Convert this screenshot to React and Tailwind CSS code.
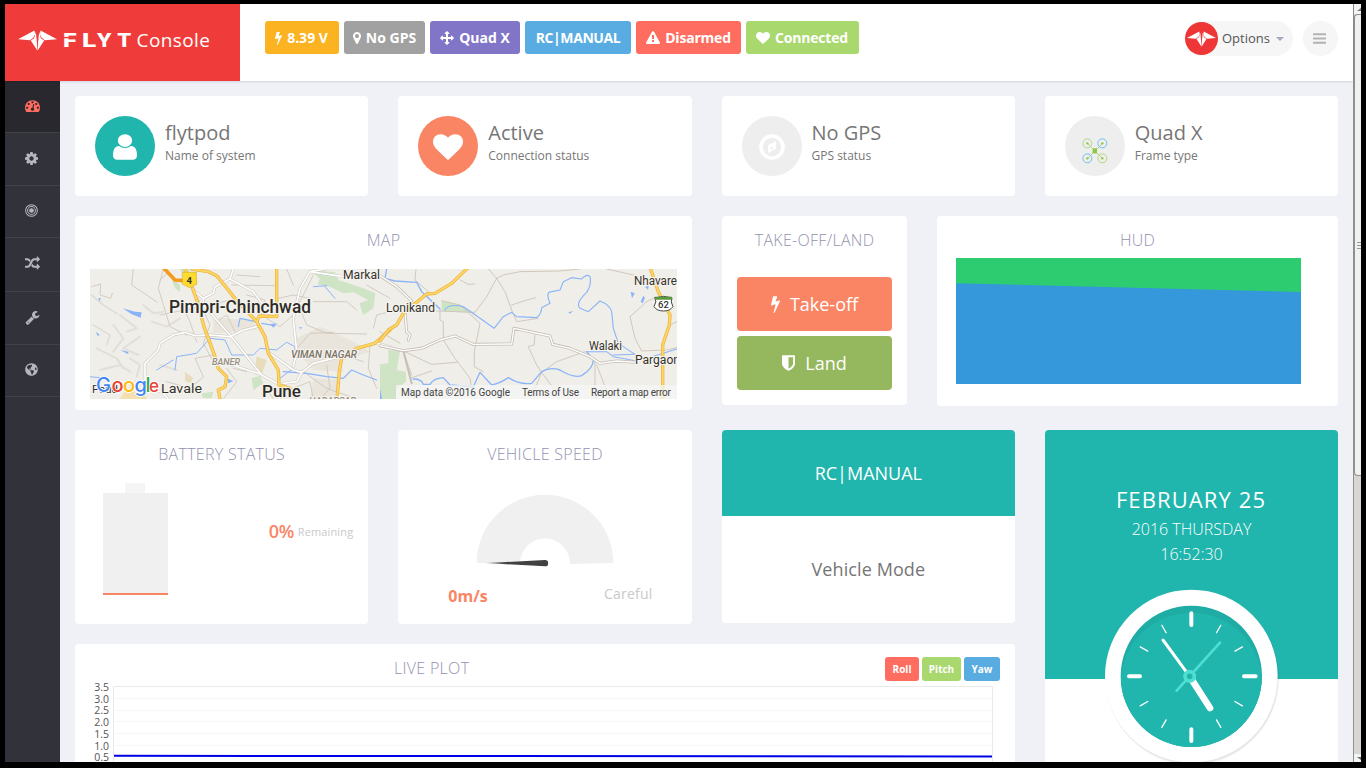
import React from "react";
import { FaGlobeAmericas } from "react-icons/fa";

const P = {
  bars: ["128 0 1536 1792", "M1664 1344v128q0 26-19 45t-45 19h-1408q-26 0-45-19t-19-45v-128q0-26 19-45t45-19h1408q26 0 45 19t19 45zm0-512v128q0 26-19 45t-45 19h-1408q-26 0-45-19t-19-45v-128q0-26 19-45t45-19h1408q26 0 45 19t19 45zm0-512v128q0 26-19 45t-45 19h-1408q-26 0-45-19t-19-45v-128q0-26 19-45t45-19h1408q26 0 45 19t19 45z"],
  bolt: ["448 0 896 1792", "M1333 566q18 20 7 44l-540 1157q-13 25-42 25-4 0-14-2-17-5-25.5-19t-4.5-30l197-808-406 101q-4 1-12 1-18 0-31-11-18-15-13-39l201-825q4-14 16-23t28-9h328q19 0 32 12.5t13 29.5q0 8-5 18l-171 463 396-98q8-2 12-2 19 0 34 15z"],
  marker: ["384 0 1024 1792", "M1152 640q0-106-75-181t-181-75-181 75-75 181 75 181 181 75 181-75 75-181zm256 0q0 109-33 179l-364 774q-16 33-47.5 52t-67.5 19-67.5-19-46.5-52l-365-774q-33-70-33-179 0-212 150-362t362-150 362 150 150 362z"],
  arrows: ["0 0 1792 1792", "M1792 896q0 26-19 45l-256 256q-19 19-45 19t-45-19-19-45v-128h-384v384h128q26 0 45 19t19 45-19 45l-256 256q-19 19-45 19t-45-19l-256-256q-19-19-19-45t19-45 45-19h128v-384h-384v128q0 26-19 45t-45 19-45-19l-256-256q-19-19-19-45t19-45l256-256q19-19 45-19t45 19 19 45v128h384v-384h-128q-26 0-45-19t-19-45 19-45l256-256q19-19 45-19t45 19l256 256q19 19 19 45t-19 45-45 19h-128v384h384v-128q0-26 19-45t45-19 45 19l256 256q19 19 19 45z"],
  warning: ["0 0 1792 1792", "M1024 1375v-190q0-14-9.5-23.5t-22.5-9.5h-192q-13 0-22.5 9.5t-9.5 23.5v190q0 14 9.5 23.5t22.5 9.5h192q13 0 22.5-9.5t9.5-23.5zm-2-374l18-459q0-12-10-19-13-11-24-11h-220q-11 0-24 11-10 7-10 21l17 457q0 10 10 16.5t24 6.5h185q14 0 23.5-6.5t10.5-16.5zm-14-934l768 1408q35 63-2 126-17 29-46.5 46t-63.5 17h-1536q-34 0-63.5-17t-46.5-46q-37-63-2-126l768-1408q17-31 47-49t65-18 65 18 47 49z"],
  heart: ["0 0 1792 1792", "M896 1664q-26 0-44-18l-624-602q-10-8-27.5-26t-55.5-65.5-68-97.5-53.5-121-23.5-138q0-220 127-344t351-124q62 0 126.5 21.5t120 58 95.5 68.5 76 68q36-36 76-68t95.5-68.5 120-58 126.5-21.5q224 0 351 124t127 344q0 221-229 450l-623 600q-18 18-44 18z"],
  tach: ["0 0 1792 1792", "M384 1152q0-53-37.5-90.5t-90.5-37.5-90.5 37.5-37.5 90.5 37.5 90.5 90.5 37.5 90.5-37.5 37.5-90.5zm192-448q0-53-37.5-90.5t-90.5-37.5-90.5 37.5-37.5 90.5 37.5 90.5 90.5 37.5 90.5-37.5 37.5-90.5zm428 481l101-382q6-26-7.5-48.5t-38.5-29.5-48 6.5-30 39.5l-101 382q-60 5-107 43.5t-63 98.5q-20 77 20 146t117 89 146-20 89-117q16-60-6-117t-72-91zm660-33q0-53-37.5-90.5t-90.5-37.5-90.5 37.5-37.5 90.5 37.5 90.5 90.5 37.5 90.5-37.5 37.5-90.5zm-640-640q0-53-37.5-90.5t-90.5-37.5-90.5 37.5-37.5 90.5 37.5 90.5 90.5 37.5 90.5-37.5 37.5-90.5zm448 192q0-53-37.5-90.5t-90.5-37.5-90.5 37.5-37.5 90.5 37.5 90.5 90.5 37.5 90.5-37.5 37.5-90.5zm320 448q0 261-141 483-19 29-54 29h-1402q-35 0-54-29-141-221-141-483 0-182 71-348t191-286 286-191 348-71 348 71 286 191 191 286 71 348z"],
  cog: ["128 0 1536 1792", "M1152 896q0-106-75-181t-181-75-181 75-75 181 75 181 181 75 181-75 75-181zm512-109v222q0 12-8 23t-20 13l-185 28q-19 54-39 91 35 50 107 138 10 12 10 25t-9 23q-27 37-99 108t-94 71q-12 0-26-9l-138-108q-44 23-91 38-16 136-29 186-7 28-36 28h-222q-14 0-24.5-8.5t-11.5-21.5l-28-184q-49-16-90-37l-141 107q-10 9-25 9-14 0-25-11-126-114-165-168-7-10-7-23 0-12 8-23 15-21 51-66.5t54-70.5q-27-50-41-99l-183-27q-13-2-21-12.5t-8-23.5v-222q0-12 8-23t19-13l186-28q14-46 39-92-40-57-107-138-10-12-10-24 0-10 9-23 26-36 98.5-107.5t94.5-71.5q13 0 26 10l138 107q44-23 91-38 16-136 29-186 7-28 36-28h222q14 0 24.5 8.5t11.5 21.5l28 184q49 16 90 37l142-107q9-9 24-9 13 0 25 10 129 119 165 170 7 8 7 22 0 12-8 23-15 21-51 66.5t-54 70.5q26 50 41 98l183 28q13 2 21 12.5t8 23.5z"],
  random: ["0 0 1792 1792", "M666 481q-60 92-137 273-22-45-37-72.5t-40.5-63.5-51-56.5-63-35-81.5-14.5h-224q-14 0-23-9t-9-23v-192q0-14 9-23t23-9h224q250 0 410 225zm1126 799q0 14-9 23l-320 320q-9 9-23 9-13 0-22.5-9.5t-9.5-22.5v-192q-32 0-85 .5t-81 1-73-1-71-5-64-10.5-63-18.5-58-28.5-59-40-55-53.5-56-69.5q59-93 136-273 22 45 37 72.5t40.5 63.5 51 56.5 63 35 81.5 14.5h256v-192q0-14 9-23t23-9q12 0 24 10l319 319q9 9 9 23zm0-896q0 14-9 23l-320 320q-9 9-23 9-13 0-22.5-9.5t-9.5-22.5v-192h-256q-48 0-87 15t-69 45-51 61.5-45 77.5q-32 62-78 171-29 66-49.5 111t-54 105-64 100-74 83-90 68.5-106.5 42-128 16.5h-224q-14 0-23-9t-9-23v-192q0-14 9-23t23-9h224q48 0 87-15t69-45 51-61.5 45-77.5q32-62 78-171 29-66 49.5-111t54-105 64-100 74-83 90-68.5 106.5-42 128-16.5h256v-192q0-14 9-23t23-9q12 0 24 10l319 319q9 9 9 23z"],
  wrench: ["0 0 1792 1792", "M448 1472q0-26-19-45t-45-19-45 19-19 45 19 45 45 19 45-19 19-45zm644-420l-682 682q-37 37-90 37-52 0-91-37l-106-108q-38-36-38-90 0-53 38-91l681-681q39 98 114.5 173.5t173.5 114.5zm634-435q0 39-23 106-47 134-164.5 217.5t-258.5 83.5q-185 0-316.5-131.5t-131.5-316.5 131.5-316.5 316.5-131.5q58 0 121.5 16.5t107.5 46.5q16 11 16 28t-16 28l-293 169v224l193 107q5-3 79-48.5t135.5-81 70.5-35.5q15 0 23.5 10t8.5 25z"],
  shield: ["256 0 1280 1792", "M1344 960v-640h-448v1137q119-63 213-137 235-184 235-360zm192-768v768q0 86-33.5 170.5t-83 150-118 127.5-126.5 103-121 77.5-89.5 49.5-42.5 20q-12 6-26 6t-26-6q-16-7-42.5-20t-89.5-49.5-121-77.5-126.5-103-118-127.5-83-150-33.5-170.5v-768q0-26 19-45t45-19h1152q26 0 45 19t19 45z"],
  user: ["256 0 1280 1792", "M1536 1399q0 109-62.5 187t-150.5 78h-854q-88 0-150.5-78t-62.5-187q0-85 8.5-160.5t31.5-152 58.5-131 94-89 134.5-34.5q131 128 313 128t313-128q76 0 134.5 34.5t94 89 58.5 131 31.5 152 8.5 160.5zm-256-887q0 159-112.5 271.5t-271.5 112.5-271.5-112.5-112.5-271.5 112.5-271.5 271.5-112.5 271.5 112.5 112.5 271.5z"],
};

function Icon({ name, className }) {
  const [viewBox, d] = P[name];
  return (
    <svg viewBox={viewBox} className={className} fill="currentColor" preserveAspectRatio="none">
      <path d={d} />
    </svg>
  );
}

/* Winged emblem on a 116 x 62 grid */
function Emblem({ className }) {
  return (
    <svg viewBox="0 0 116 62" className={className} fill="#fff">
      <path d="M0 27 L49 1 L51 12 L46 22 L36 30 Z M116 27 L67 1 L65 12 L70 22 L80 30 Z" />
      <path d="M38 31 L48 24 L53 6 L56 34 L57.5 61 Z M78 31 L68 24 L63 6 L60 34 L58.5 61 Z" />
    </svg>
  );
}

function Badge({ className, icon, iconClass, textClass = "", children }) {
  return (
    <div className={"flex h-[33px] items-center justify-center rounded-[3px] text-sm font-bold text-white " + className}>
      {icon && <Icon name={icon} className={"mr-[5px] shrink-0 " + iconClass} />}
      <span className={"whitespace-nowrap " + textClass}>{children}</span>
    </div>
  );
}

function Stat({ circle, icon, title, sub }) {
  return (
    <div className="flex h-[100px] rounded-[4px] bg-white px-5 pt-5">
      <div className={"flex size-[60px] items-center justify-center rounded-full " + circle}>{icon}</div>
      <div className="pt-[5px] pl-[10px] text-[#767676]">
        <div className="text-[20px] leading-[24px]">{title}</div>
        <div className="mt-px text-[12px] leading-[20px]">{sub}</div>
      </div>
    </div>
  );
}

function Title({ children }) {
  return <div className="text-center text-[16px] leading-[22px] font-light tracking-[0.3px] text-[#9292b0]">{children}</div>;
}

const nav = [
  ["h-[52px] bg-[#29282e] text-[#ff6c60]", <Icon name="tach" className="size-[15px]" />],
  ["h-[53px]", <Icon name="cog" className="h-[15px] w-[13px]" />],
  ["h-[52px]", (
    <svg viewBox="0 0 14 14" className="size-[13px]" fill="none" stroke="currentColor" strokeWidth="1.1">
      <circle cx="7" cy="7" r="6.3" /><circle cx="7" cy="7" r="4.2" /><circle cx="7" cy="7" r="2" fill="currentColor" />
    </svg>
  )],
  ["h-[54px]", <Icon name="random" className="size-[15px]" />],
  ["h-[53px]", <Icon name="wrench" className="size-[15px]" />],
  ["h-[52px]", <FaGlobeAmericas className="size-[13px]" />],
];

function Compass() {
  return (
    <svg viewBox="0 0 78 78" className="mt-[2px] size-[26px]" fill="none">
      <circle cx="39" cy="39" r="33" stroke="#fff" strokeWidth="11" />
      <path d="M51 21 V44 L27 57 V34 Z" fill="#fff" />
      <path d="M35 38 V48 L45 42 Z" fill="#eee" />
    </svg>
  );
}

function Quad() {
  return (
    <svg viewBox="0 0 78 78" className="mt-[9px] size-[26px]" fill="none" strokeWidth="3">
      <path d="M17 17 L61 61 M61 17 L17 61" stroke="#a9cf6c" strokeWidth="2.5" />
      <g stroke="#b3d585"><circle cx="16" cy="16" r="13.5" /><circle cx="61" cy="61" r="13.5" /></g>
      <g stroke="#6cc3ea"><circle cx="61" cy="16" r="13.5" /><circle cx="16" cy="61" r="13.5" /></g>
      <g fill="#8dc63f">
        <circle cx="16" cy="16" r="3.5" /><circle cx="61" cy="61" r="3.5" /><circle cx="61" cy="16" r="3.5" /><circle cx="16" cy="61" r="3.5" />
        <rect x="32" y="31" width="13" height="15" />
      </g>
    </svg>
  );
}

function Label({ x, y, w, size, weight = 400, fill = "#35322b", italic, children }) {
  return (
    <text x={x} y={y} textLength={w} lengthAdjust="spacingAndGlyphs" fontSize={size} fontWeight={weight} fill={fill}
      fontStyle={italic ? "italic" : "normal"} stroke="#f6f4f0" strokeWidth="2.2" strokeLinejoin="round" paintOrder="stroke">
      {children}
    </text>
  );
}

function RoadMap() {
  return (
    <svg viewBox="0 0 587 130" className="block h-[130px] w-full" fontFamily="Roboto, sans-serif" fill="none">
      <rect width="587" height="130" fill="#f0eee9" />
      {/* western half */}
      <g transform="translate(-10 -14) scale(.33333)" strokeLinejoin="round" strokeLinecap="round">
        <g fill="#e9e4dc">
          <path d="M650 250 L720 215 L830 265 L870 290 L780 320 L790 350 L700 345 L660 300Z" />
          <path d="M700 370 L780 375 L770 432 L690 432Z" /><path d="M400 190 L520 195 L530 225 L400 235Z" />
          <path d="M530 305 L560 315 L545 360 L525 340Z" fill="#e8dcbc" />
          <path d="M315 350 L340 370 L330 385 L315 378Z" fill="#e8dcbc" />
          <path d="M140 400 L200 425 L200 432 L120 432Z" fill="#f3e0ae" />
        </g>
        <g fill="#cfe3c5">
          <path d="M690 45 L765 52 L775 75 L850 100 L886 115 L880 160 L850 180 L838 145 L865 135 L820 112 L790 115 L750 95 L712 88 L720 72Z" />
          <path d="M270 60 L300 90 L300 110 L285 100Z" /><path d="M300 42 L330 42 L325 55 L305 52Z" />
          <path d="M515 370 L540 362 L550 385 L520 405Z" /><path d="M365 415 L400 410 L395 430 L368 428Z" />
        </g>
        <g stroke="#e2dfd9" strokeWidth="6">
          <path d="M35 120 L70 150 L110 175 M120 180 L170 220 L140 230 M40 210 L90 240 L80 270 M180 245 L130 280 L175 300 M50 280 L110 310 L130 340 M215 200 L260 215 L300 190 M60 345 L120 330 L150 350 M240 330 L290 345 M100 210 L130 250 L100 290 M190 150 L220 175 L250 170 M150 310 L180 330 L170 365" />
        </g>
        <g stroke="#cdc5ba" strokeWidth="2.5">
          <path d="M35 95 L62 87 L60 120 L92 130 L97 115" /><path d="M160 42 L155 90 L188 112 L232 142" />
          <path d="M250 42 L235 100 L270 215 L320 240" /><path d="M262 55 L240 75 M340 100 L390 210 L370 265 L400 320" />
          <path d="M240 180 L390 150 L470 130 M500 120 L555 135 L545 180 M470 60 L540 65 M455 90 L590 92" />
          <path d="M595 130 L640 120 L690 130 M620 42 L640 90 M700 60 L655 150 L680 210 L740 235 L860 237" />
          <path d="M655 275 L690 235 L760 232 M640 180 L600 215 L560 190 M700 140 L800 140 L830 165" />
          <path d="M260 380 L330 400 L370 365 L345 310 L400 300 M440 340 L470 380 L430 432 M460 340 L500 350 M560 400 L580 432" />
          <path d="M640 400 L690 380 L700 432 M670 350 L740 400 L830 432 M740 330 L750 400 L720 432 M600 395 L650 432" />
          <path d="M870 270 L865 340 L890 400 M790 300 L850 320 M310 160 L330 200 L350 260 M410 200 L440 180 L470 240 M880 220 L890 180 L930 170 M860 90 L930 130" />
        </g>
        <g stroke="#8ab4f8" strokeWidth="3">
          <path d="M285 345 L290 305 L350 295 L390 250 L435 255 L455 300 L520 300 L540 280 L590 285 L620 262 L645 275 L640 340 L600 370" />
          <path d="M475 215 L480 190 L530 200 M545 205 L585 212 M610 350 L680 355 L740 365 L790 370 L815 345 L850 360 L890 375" strokeWidth="3.5" />
          <path d="M735 95 L765 130 M700 95 L740 92 M230 345 L280 315 M30 365 L80 370" />
        </g>
        <g fill="#8ab4f8">
          <path d="M128 160 L165 170 L185 172 L182 188 L155 178Z" /><path d="M120 285 L145 290 L145 298Z" /><path d="M48 230 L60 240 L52 242Z" />
          <path d="M440 370 L460 378 L445 385Z" /><path d="M55 130 L62 128 L60 140Z" /><path d="M570 208 L590 205 L580 218Z" /><path d="M658 215 L668 218 L660 222Z" />
        </g>
        <g stroke="#cfcac2" strokeWidth="8.5">
          <path d="M195 390 V325 L235 285 L240 265 L280 240 L315 232 L345 242 L390 240 L450 245 L490 225 L530 215" />
          <path d="M370 130 V150 L450 240 L545 360 L590 385" /><path d="M345 110 L370 130 L400 115 L405 95 L450 72 L460 42" />
          <path d="M450 72 L520 110 L545 145" /><path d="M735 42 L690 50 L660 100 L640 190 L650 290 L640 335" /><path d="M690 50 L790 65" />
          <path d="M455 330 L545 358" /><path d="M570 295 L640 345 L665 352 L700 325 L780 305" /><path d="M665 352 L650 380 L610 385" /><path d="M890 265 L930 275" />
          <path d="M195 390 L250 415 L265 432" />
        </g>
        <g stroke="#fff" strokeWidth="5">
          <path d="M195 390 V325 L235 285 L240 265 L280 240 L315 232 L345 242 L390 240 L450 245 L490 225 L530 215" />
          <path d="M370 130 V150 L450 240 L545 360 L590 385" /><path d="M345 110 L370 130 L400 115 L405 95 L450 72 L460 42" />
          <path d="M450 72 L520 110 L545 145" /><path d="M735 42 L690 50 L660 100 L640 190 L650 290 L640 335" /><path d="M690 50 L790 65" />
          <path d="M455 330 L545 358" /><path d="M570 295 L640 345 L665 352 L700 325 L780 305" /><path d="M665 352 L650 380 L610 385" /><path d="M890 265 L930 275" />
          <path d="M195 390 L250 415 L265 432" />
        </g>
        <g strokeWidth="10" stroke="#eab13d">
          <path d="M338 100 L352 140 L372 215 L405 305 L415 340 L440 365 L435 395 L415 405 L420 432" />
          <path d="M335 42 L385 50 L410 62 L465 130 L530 200 L555 245 L565 295 L595 345 L597 390 L630 400" />
          <path d="M590 42 V185 L538 183 L530 200" /><path d="M930 225 L885 265 L830 280 L785 310 L778 350 L772 420" /><path d="M315 42 L320 60" />
        </g>
        <g strokeWidth="6" stroke="#fdd663">
          <path d="M338 100 L352 140 L372 215 L405 305 L415 340 L440 365 L435 395 L415 405 L420 432" />
          <path d="M335 42 L385 50 L410 62 L465 130 L530 200 L555 245 L565 295 L595 345 L597 390 L630 400" />
          <path d="M590 42 V185 L538 183 L530 200" /><path d="M930 225 L885 265 L830 280 L785 310 L778 350 L772 420" /><path d="M315 42 L320 60" />
        </g>
        <path d="M250 38 L285 75 L310 77" stroke="#f59a1c" strokeWidth="11" />
        <path d="M308 52 H349 L350 88 L329 98 L308 88Z" fill="#fddc2e" stroke="#d5b12e" strokeWidth="2" />
      </g>
      {/* eastern half */}
      <g transform="translate(290 -14) scale(.33333)" strokeLinejoin="round" strokeLinecap="round">
        <g fill="#cfe3c5">
          <path d="M25 285 L60 288 L50 345 L78 350 L78 380 L50 400 L48 432 H0 V328 L25 325Z" />
          <path d="M185 137 L240 150 L280 175 L220 170 L185 168Z" />
        </g>
        <g stroke="#cdc5ba" strokeWidth="2.8">
          <path d="M108 42 L105 75 L145 110 M180 165 V195 L190 200 L190 255 L225 310 L270 370 L275 400" /><path d="M325 42 L350 70 L320 125 L285 172 L170 168 M350 70 L370 60 L420 50 L540 48 L600 42" />
          <path d="M350 70 L375 110 L395 165 L410 200 L475 190 M395 150 L440 135 L468 128" /><path d="M185 137 L240 150 L300 205 L283 290 V335 L310 350" />
          <path d="M465 240 L462 270 L445 275 L470 330 L485 352 L530 320 L615 290 M485 352 L465 400 M485 352 L520 400" /><path d="M645 310 V432 M650 330 L690 432 M70 288 L95 360 M70 288 L155 328 L230 322" />
          <path d="M750 185 L800 140 L820 130 M750 185 L765 250 L785 288 L860 285 L890 278 M680 42 L760 60 M240 75 L265 88 L285 87 M90 370 L155 348 M870 210 L890 200 M0 230 L60 265" />
        </g>
        <g stroke="#8ab4f8" strokeWidth="4">
          <path d="M20 42 L15 70 L45 78 L110 82 L125 110 L180 162" />
          <path d="M195 165 Q205 145 250 155 Q280 175 300 190 L342 220 L370 185 L395 172 L410 185 L470 188 Q485 175 485 158 L510 145 Q495 110 515 110 L540 105 L550 80 L575 68 L605 72 Q620 55 630 65 Q635 90 620 112 Q585 145 600 160 L625 170 L660 138 Q690 150 695 170 L700 220 L715 265" strokeWidth="3.4" />
          <path d="M715 265 L765 298 L700 300 M800 310 L850 295 L890 282 M620 290 L680 290 L700 305 L770 318" strokeWidth="3.2" />
          <path d="M100 372 Q125 372 130 388 L150 388 Q160 370 190 368 L210 390 L280 395 L300 352 L335 390 Q360 385 385 368 Q420 390 455 385 L485 350 Q510 335 540 345 Q580 370 605 362 Q640 340 640 315 L620 290" />
        </g>
        <g fill="#8ab4f8"><path d="M752 110 L764 115 L756 130Z" /><path d="M790 122 L795 128 L788 145 L782 140Z" /><path d="M565 172 L580 168 L570 176Z" /><path d="M795 95 L806 92 L804 104Z" /><path d="M0 400 L6 432 H0Z" /></g>
        <g stroke="#c6bfb4" strokeWidth="9">
          <path d="M0 62 L50 95 L95 138 L75 175 L80 230 L90 240 L85 255" /><path d="M0 272 L70 287 L125 280 L180 255 L225 243 L280 268 L395 267 L402 220 L510 243 L518 268 L570 280 L630 305 L660 325 L710 318 L770 322" /><path d="M70 287 L95 385" strokeWidth="6" />
        </g>
        <g stroke="#fff" strokeWidth="4">
          <path d="M0 62 L50 95 L95 138 L75 175 L80 230 L90 240 L85 255" /><path d="M0 272 L70 287 L125 280 L180 255 L225 243 L280 268 L395 267 L402 220 L510 243 L518 268 L570 280 L630 305 L660 325 L710 318 L770 322" />
        </g>
        <g stroke="#eab13d" strokeWidth="10"><path d="M0 258 L25 225 L50 210 L70 175 L140 117 L165 115 L215 85 L262 40" /><path d="M812 42 L835 110 L870 180 L868 210 L848 270 V432" /></g>
        <g stroke="#fdd663" strokeWidth="6"><path d="M0 258 L25 225 L50 210 L70 175 L140 117 L165 115 L215 85 L262 40" /><path d="M812 42 L835 110 L870 180 L868 210 L848 270 V432" /></g>
        <path d="M825 128 Q851 120 876 128 Q870 140 879 155 Q870 168 851 168 Q830 168 822 155 Q832 140 825 128Z" fill="#fff" stroke="#444" strokeWidth="3" />
        <path d="M825 125 H876 L874 134 H828Z" fill="#5b9a3c" />
      </g>
      <text x="96.5" y="14.5" fontSize="9.5" fontWeight="700" fill="#333">4</text>
      <text x="568" y="39" fontSize="9.5" fontWeight="500" fill="#333">62</text>
      <Label x={253} y={9.5} size={12} w={37}>Markal</Label>
      <Label x={79} y={44} size={17.5} w={142} weight={500} fill="#2d2b26">Pimpri-Chinchwad</Label>
      <Label x={296} y={43} size={12} w={49}>Lonikand</Label>
      <Label x={544} y={16} size={12} w={43}>Nhavare</Label>
      <Label x={499} y={81} size={12} w={33}>Walaki</Label>
      <Label x={545} y={95} size={12} w={45}>Pargaon</Label>
      <Label x={201} y={88.5} size={10} w={66} italic weight={500} fill="#7a7266">VIMAN NAGAR</Label>
      <Label x={122} y={95.5} size={9} w={28} italic weight={500} fill="#958d80">BANER</Label>
      <Label x={219} y={134.5} size={9} w={47} italic weight={500} fill="#958d80">HADAPSAR</Label>
      <Label x={71} y={124} size={13} w={41}>Lavale</Label>
      <Label x={2} y={124} size={11} w={26}>Paud</Label>
      <Label x={172} y={128} size={17} w={39} weight={500} fill="#2d2b26">Pune</Label>
      <text y="123" fontSize="20" fontWeight="500" fontFamily="Inter, sans-serif" stroke="#fff" strokeWidth="1.5" paintOrder="stroke">
        <tspan x="6" fill="#4285f4">G</tspan><tspan x="21.5" fill="#ea4335">o</tspan><tspan x="33" fill="#fbbc05">o</tspan><tspan x="44.5" fill="#4285f4">g</tspan><tspan x="55.5" fill="#34a853">l</tspan><tspan x="59" fill="#ea4335" fontSize="17">e</tspan>
      </text>
      <rect x="306" y="116" width="281" height="14" fill="#f5f5f5" fillOpacity=".75" />
      <g fill="#444" fontSize="10">
        <text x="311" y="127" textLength="109">Map data ©2016 Google</text>
        <text x="432" y="127" textLength="57">Terms of Use</text>
        <text x="501" y="127" textLength="80">Report a map error</text>
      </g>
    </svg>
  );
}

function Clock() {
  const ticks = [30, 60, 120, 150, 210, 240, 300, 330];
  return (
    <svg viewBox="165 30 578 578" className="absolute top-[150px] left-[50px] size-[192.67px]" strokeLinecap="round">
      <defs><clipPath id="face"><circle cx="454" cy="319" r="212" /></clipPath></defs>
      <circle cx="457" cy="325" r="260" fill="#000" fillOpacity=".04" />
      <circle cx="456" cy="322" r="260" fill="#000" fillOpacity=".06" />
      <circle cx="454" cy="318" r="259" fill="#fff" />
      <circle cx="454" cy="319" r="212" fill="#1eaca4" />
      <circle cx="454" cy="340" r="212" fill="#20b5ad" clipPath="url(#face)" />
      <g stroke="#fff" strokeWidth="12">
        <path d="M454 130 V165 M454 478 V513 M267 319 H300 M612 319 H647" />
      </g>
      <g stroke="#fff" strokeWidth="4">
        {ticks.map((a) => <path key={a} d="M454 142 V168" transform={`rotate(${a} 454 319)`} />)}
      </g>
      <path d="M449 319 L369 210" stroke="#fff" strokeWidth="9" />
      <path d="M449 319 L510 414" stroke="#fff" strokeWidth="20" />
      <path d="M410 362 L540 218" stroke="#4fdfd2" strokeWidth="8" />
      <circle cx="449" cy="319" r="14" fill="#20b5ad" stroke="#4fdfd2" strokeWidth="11" />
    </svg>
  );
}

export default function App() {
  return (
    <div className="h-[768px] w-[1366px] overflow-hidden bg-black pt-1 pr-[5px] pb-[6px] pl-[5px] font-['Open_Sans',sans-serif]">
      <div className="flex h-[758px] overflow-hidden bg-[#f0f1f7]">
        <div className="flex w-[1348px] flex-col">
          <header className="z-10 flex h-[77px] shrink-0 bg-white shadow-[0_1px_2px_rgba(0,0,0,0.12)]">
            <div className="flex w-[235px] bg-[#ef3c3a] pt-[26px] pl-[13px]">
              <Emblem className="h-[21px] w-[39px]" />
              <svg viewBox="0 0 160 24" className="ml-[5px] h-6 w-[160px]" fill="#fff">
                <g fontSize="18.5" fontWeight="800" fontFamily="Inter, sans-serif">
                  <text x="1" y="17" textLength="14" lengthAdjust="spacingAndGlyphs">F</text>
                  <text x="20" y="17" textLength="14.5" lengthAdjust="spacingAndGlyphs">L</text>
                  <text x="34.5" y="17" textLength="15.5" lengthAdjust="spacingAndGlyphs">Y</text>
                  <text x="55" y="17" textLength="14.5" lengthAdjust="spacingAndGlyphs">T</text>
                </g>
                <path d="M1 7.6 H13" stroke="#ef3c3a" strokeWidth="1.4" />
                <text x="74.5" y="17" fontSize="19" textLength="73.5" fontFamily="Open Sans, sans-serif">Console</text>
              </svg>
            </div>
            <div className="flex gap-[5px] pt-[17px] pl-[25px]">
              <Badge className="w-[74px] bg-[#fcb322] pr-px" icon="bolt" iconClass="h-[14px] w-[7px]">8.39 V</Badge>
              <Badge className="w-[81px] bg-[#a1a1a1]" icon="marker" iconClass="h-[14px] w-[8px]">No GPS</Badge>
              <Badge className="w-[90px] bg-[#8175c7]" icon="arrows" iconClass="size-[14px]">Quad X</Badge>
              <Badge className="w-[106px] bg-[#58ace2]" textClass="tracking-[-0.4px]">RC|MANUAL</Badge>
              <Badge className="w-[105px] bg-[#ff6c60]" icon="warning" iconClass="size-[14px]" textClass="tracking-[-0.2px]">Disarmed</Badge>
              <Badge className="w-[113px] bg-[#a9d86e] pr-px" icon="heart" iconClass="size-[14px]" textClass="tracking-[-0.2px]">Connected</Badge>
            </div>
            <div className="ml-auto flex gap-[10px] pt-[17px] pr-[15px]">
              <div className="flex h-[35px] w-[108px] items-center rounded-full bg-[#f6f6f6]">
                <div className="flex size-[33px] shrink-0 items-center justify-center rounded-full bg-[#ef3637]">
                  <Emblem className="h-[16px] w-[29px]" />
                </div>
                <span className="ml-1 text-[13px] text-[#555]">Options</span>
                <span className="ml-[6px] border-x-4 border-t-4 border-x-transparent border-t-[#a4aaba]" />
              </div>
              <div className="flex size-[35px] items-center justify-center rounded-full bg-[#f6f6f6] pr-[2px]">
                <Icon name="bars" className="h-[15px] w-[13px] text-[#b3b3b3]" />
              </div>
            </div>
          </header>

          <div className="flex h-[681px]">
            <nav className="w-[55px] shrink-0 bg-[#32323a] text-[#b4b8bd]">
              {nav.map(([cls, icon], i) => (
                <div key={i} className={"flex items-center border-b border-[#414148] pb-[2px] pl-5 " + cls}>{icon}</div>
              ))}
            </nav>

            <main className="flex w-[1293px] shrink-0 flex-col px-[15px] pt-[15px]">
              <div className="grid shrink-0 grid-cols-4 gap-x-[30px]">
                <Stat circle="bg-[#20b5ad] text-white" icon={<Icon name="user" className="mt-[2px] h-[30px] w-[24px]" />} title="flytpod" sub="Name of system" />
                <Stat circle="bg-[#fa8564] text-white" icon={<Icon name="heart" className="mt-[2px] size-[30px]" />} title="Active" sub="Connection status" />
                <Stat circle="bg-[#eee]" icon={<Compass />} title="No GPS" sub="GPS status" />
                <Stat circle="bg-[#eee]" icon={<Quad />} title="Quad X" sub="Frame type" />
              </div>

              <div className="mt-5 flex h-[194px] shrink-0 items-start gap-[30px]">
                <section className="h-[194px] w-[617px] rounded-[4px] bg-white px-[15px] pt-[13px]">
                  <Title>MAP</Title>
                  <div className="mt-[18px]"><RoadMap /></div>
                </section>
                <section className="h-[189px] w-[185px] rounded-[4px] bg-white px-[15px] pt-[13px]">
                  <Title>TAKE-OFF/LAND</Title>
                  <button className="mt-[26px] flex h-[54px] w-full items-center justify-center gap-[10px] rounded-[4px] bg-[#fa8564] text-[18px] text-white">
                    <Icon name="bolt" className="h-[18px] w-[9px]" />Take-off
                  </button>
                  <button className="mt-[5px] flex h-[54px] w-full items-center justify-center gap-[10px] rounded-[4px] bg-[#95b75d] text-[18px] text-white">
                    <Icon name="shield" className="h-[18px] w-[13px]" />Land
                  </button>
                </section>
                <section className="h-[190px] w-[401px] rounded-[4px] bg-white pt-[13px]">
                  <Title>HUD</Title>
                  <svg viewBox="0 0 345 126" className="mt-[7px] ml-[19px] block h-[126px] w-[345px]">
                    <rect width="345" height="126" fill="#3498db" />
                    <path d="M0 0 H345 V34 L0 25.3 Z" fill="#2ecc71" />
                  </svg>
                </section>
              </div>

              <div className="mt-5 flex shrink-0 gap-[30px]">
                <div className="flex w-[940px] shrink-0 flex-col gap-5">
                  <div className="grid h-[194px] grid-cols-3 items-start gap-[30px]">
                    <section className="h-[194px] rounded-[4px] bg-white pt-[13px]">
                      <Title>BATTERY STATUS</Title>
                      <div className="flex justify-between pt-[18px] pr-[15px] pl-[28px]">
                        <div className="flex flex-col">
                          <div className="ml-[22px] h-[10px] w-[20px] bg-[#f5f5f5]" />
                          <div className="h-[102px] w-[65px] border-b-2 border-[#fa8564] bg-[#f0f0f0]" />
                        </div>
                        <div className="flex items-start gap-[4px] pt-[35px]">
                          <span className="text-[18px] leading-[27px] font-semibold tracking-[-0.5px] text-[#fa8564]">0%</span>
                          <span className="pt-[5px] text-[11px] leading-[17px] tracking-[0.15px] text-[#c9c9c9]">Remaining</span>
                        </div>
                      </div>
                    </section>
                    <section className="h-[194px] rounded-[4px] bg-white pt-[13px]">
                      <Title>VEHICLE SPEED</Title>
                      <svg viewBox="255 200 420 230" className="mt-[26.6px] ml-[77px] block h-[76.7px] w-[140px]">
                        <defs><linearGradient id="needle"><stop offset="0" stopColor="#999" /><stop offset=".35" stopColor="#414141" /></linearGradient></defs>
                        <path d="M260 413 A205 205 0 0 1 670 413 L540 416 A75 75 0 1 0 390 413 Z" fill="#f0f0f0" />
                        <path d="M287 413 L465 404 A9 9 0 0 1 465 423 Z" fill="url(#needle)" />
                      </svg>
                      <div className="flex items-start justify-between pt-[15px] pr-[39px] pl-[50px]">
                        <span className="pt-[2px] text-[16px] leading-[22px] font-bold text-[#fa8564]">0m/s</span>
                        <span className="pt-px text-[14px] leading-[20px] tracking-[0.25px] text-[#c9c9c9]">Careful</span>
                      </div>
                    </section>
                    <section className="h-[193px] overflow-hidden rounded-[4px] bg-white text-center">
                      <div className="flex h-[86px] items-center justify-center bg-[#20b5ad] text-[18px] text-white">RC|MANUAL</div>
                      <div className="pt-[40px] text-[18px] leading-[27px] tracking-[0.1px] text-[#767676]">Vehicle Mode</div>
                    </section>
                  </div>
                  <section className="h-[200px] rounded-[4px] bg-white">
                    <div className="flex justify-between pt-[13px] pr-[15px] pl-[319px]">
                      <Title>LIVE PLOT</Title>
                      <div className="flex gap-[3px] text-[10px] font-bold text-white">
                        <span className="flex h-6 w-[34px] items-center justify-center rounded-[3px] bg-[#ff6c60]">Roll</span>
                        <span className="flex h-6 w-[39px] items-center justify-center rounded-[3px] bg-[#a9d86e]">Pitch</span>
                        <span className="flex h-6 w-[36px] items-center justify-center rounded-[3px] bg-[#58ace2]">Yaw</span>
                      </div>
                    </div>
                    <svg viewBox="0 0 940 120" className="block h-[120px] w-[940px]" fontFamily="Open Sans, sans-serif">
                      {["3.5", "3.0", "2.5", "2.0", "1.5", "1.0", "0.5"].map((t, i) => (
                        <g key={t}>
                          {i > 0 && i < 6 && <path d={`M39 ${5.5 + Math.round(i * 11.8)} H917`} stroke="#f6f6f6" />}
                          <text x="34" y={9.8 + i * 11.75} textAnchor="end" fontSize="10.5" fill="#545454">{t}</text>
                        </g>
                      ))}
                      <path d="M38.5 120 V5.5 H917.5 V120" fill="none" stroke="#eaeaea" />
                      <path d="M39 74.8 L917 75.4" stroke="#0000e6" strokeWidth="2" />
                    </svg>
                  </section>
                </div>

                <section className="relative h-[400px] w-[293px] rounded-[4px] bg-white">
                  <div className="h-[249px] rounded-t-[4px] bg-[#20b5ad] pt-[54px] text-center text-white">
                    <div className="pr-px text-[22px] leading-[30px] tracking-[1.1px]">FEBRUARY 25</div>
                    <div className="mt-[3px] text-[16px] leading-[25px] font-light">2016 THURSDAY</div>
                    <div className="text-[16px] leading-[25px] font-light">16:52:30</div>
                  </div>
                  <Clock />
                </section>
              </div>
            </main>
          </div>
        </div>

        <div className="flex w-2 shrink-0 flex-col border-l border-[#8f8f8f] bg-[#d8d6d3]">
          <div className="flex h-[10px] items-center justify-end bg-[#f4f4f4]">
            <span className="border-r-0 border-b-[3px] border-l-4 border-b-[#777] border-l-transparent" />
          </div>
          <div className="flex h-[462px] flex-col items-end justify-center gap-[2px] rounded-l-[4px] border-y border-l border-[#8f8f8f] bg-[#f1f1f0]">
            <span className="h-px w-1 bg-[#999]" />
            <span className="h-px w-1 bg-[#999]" />
            <span className="h-px w-1 bg-[#999]" />
          </div>
          <div className="mt-auto flex h-[8px] items-center justify-end bg-[#f4f4f4]">
            <span className="border-t-[3px] border-l-4 border-t-[#666] border-l-transparent" />
          </div>
        </div>
      </div>
    </div>
  );
}
